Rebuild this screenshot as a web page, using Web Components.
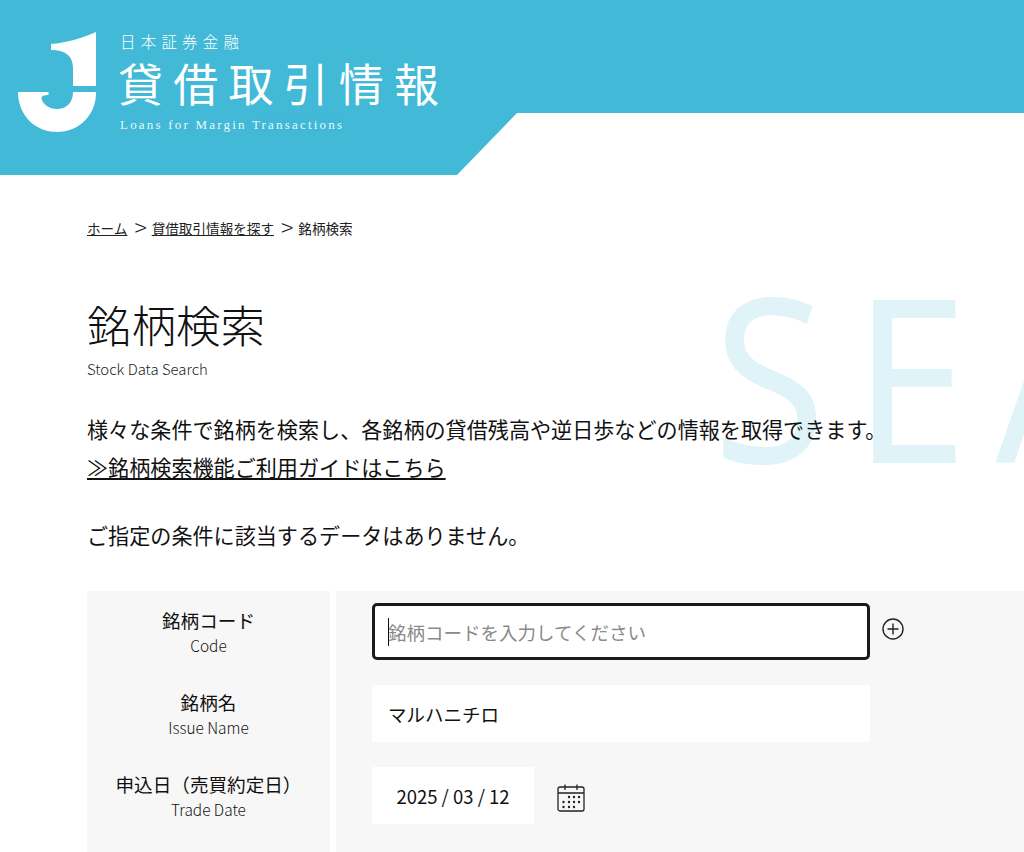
<!DOCTYPE html>
<html lang="ja">
<head>
<meta charset="utf-8">
<title>銘柄検索</title>
<style>
  html, body { margin: 0; height: 852px; overflow: hidden; background: #fff; }
  body { font-family: "Noto Sans CJK JP", "Noto Sans", sans-serif; color: #111; }
</style>
</head>
<body>
<site-header></site-header>
<page-main>
  <bread-crumbs></bread-crumbs>
  <page-title sub="Stock Data Search">銘柄検索</page-title>
  <intro-text></intro-text>
  <search-form>
    <form-row label="銘柄コード" sub="Code">
      <text-box placeholder="銘柄コードを入力してください" focused></text-box>
      <plus-icon></plus-icon>
    </form-row>
    <form-row label="銘柄名" sub="Issue Name">
      <text-box value="マルハニチロ"></text-box>
    </form-row>
    <form-row label="申込日（売買約定日）" sub="Trade Date">
      <date-box value="2025 / 03 / 12"></date-box>
      <calendar-icon></calendar-icon>
    </form-row>
  </search-form>
</page-main>

<script>
class SiteHeader extends HTMLElement {
    constructor() {
        super();
        this.attachShadow({ mode: 'open' });
    }

    connectedCallback() {
        this.shadowRoot.innerHTML = `
      <style>
        :host {
          display: block;
          height: 175px;
          background: #41b9d7;
          clip-path: polygon(0 0, 100% 0, 100% 113px, 517px 113px, 457px 175px, 0 175px);
          color: #fff;
        }
        .wrap {
          display: flex;
          gap: 24px;
          padding: 32px 0 0 18px;
        }
        svg { display: block; width: 78px; height: 100px; flex: none; }
        .small {
          font-size: 15.5px;
          line-height: 18px;
          letter-spacing: 5.2px;
          font-weight: 300;
        }
        .big {
          font-size: 45px;
          line-height: 56px;
          letter-spacing: 10.2px;
          font-weight: 400;
          margin: 5px 0 0 -2px;
          white-space: nowrap;
        }
        .en {
          font-family: "Liberation Serif", serif;
          font-size: 13px;
          line-height: 16px;
          letter-spacing: 2.2px;
          margin-top: 6px;
          opacity: .9;
        }
      </style>
      <div class="wrap">
        <svg viewBox="18 32 78 100" aria-hidden="true">
          <path fill="#fff" d="M96 32C82 38 66 43 51 44V50C64 50 73 55 73 68V86H96Z"/>
          <path fill="#fff" d="M18 92H48.5V95C44 95 41.5 96 41.5 98C42 104 49 109 57 109C66 109 73 103 73 92H96V93C96 115 79 132 57 132C35 132 18 115 18 92Z"/>
        </svg>
        <div class="text">
          <div class="small">日本証券金融</div>
          <div class="big">貸借取引情報</div>
          <div class="en">Loans for Margin Transactions</div>
        </div>
      </div>
    `;
    }
}
customElements.define('site-header', SiteHeader);

class PageMain extends HTMLElement {
    constructor() {
        super();
        this.attachShadow({ mode: 'open' });
    }

    connectedCallback() {
        this.shadowRoot.innerHTML = `
      <style>
        :host {
          display: block;
          position: relative;
          height: 677px;
          overflow: hidden;
        }
        .bg {
          position: absolute;
          left: 713px;
          top: 60px;
          font-family: "Noto Sans", sans-serif;
          font-weight: 400;
          font-size: 228px;
          line-height: 280px;
          letter-spacing: 31px;
          color: #dff3f8;
          white-space: nowrap;
          transform: scaleX(.9);
          transform-origin: left top;
        }
        .content { position: relative; padding-left: 87px; }
      </style>
      <div class="bg">SEARCH</div>
      <div class="content"><slot></slot></div>
    `;
    }
}
customElements.define('page-main', PageMain);

class BreadCrumbs extends HTMLElement {
    constructor() {
        super();
        this.attachShadow({ mode: 'open' });
    }

    connectedCallback() {
        this.shadowRoot.innerHTML = `
      <style>
        :host {
          display: block;
          padding-top: 42px;
          height: 20px;
          font-size: 13.6px;
          line-height: 20px;
          color: #222;
        }
        a { color: inherit; text-decoration: underline; }
        .sep {
          display: inline-block;
          position: relative;
          top: 2px;
          font-size: 23px;
          line-height: 14px;
          height: 14px;
          margin: 0 5px 0 7px;
          font-weight: 300;
        }
      </style>
      <a href="#">ホーム</a><span class="sep">&gt;</span><a href="#">貸借取引情報を探す</a><span class="sep">&gt;</span>銘柄検索
    `;
    }
}
customElements.define('bread-crumbs', BreadCrumbs);

class PageTitle extends HTMLElement {
    constructor() {
        super();
        this.attachShadow({ mode: 'open' });
    }

    connectedCallback() {
        this.shadowRoot.innerHTML = `
      <style>
        :host { display: block; margin-top: 53px; }
        h1 {
          margin: 0;
          font-size: 44.5px;
          line-height: 68px;
          font-weight: 300;
        }
        p {
          margin: 0;
          font-size: 14.9px;
          line-height: 22px;
          font-weight: 300;
          color: #222;
        }
      </style>
      <h1><slot></slot></h1>
      <p>${this.getAttribute('sub')}</p>
    `;
    }
}
customElements.define('page-title', PageTitle);

class IntroText extends HTMLElement {
    constructor() {
        super();
        this.attachShadow({ mode: 'open' });
    }

    connectedCallback() {
        this.shadowRoot.innerHTML = `
      <style>
        :host {
          display: block;
          margin-top: 30px;
          font-size: 21.1px;
          line-height: 38px;
          white-space: nowrap;
        }
        a { color: inherit; text-decoration: underline; }
        p { margin: 0; }
        .note { margin-top: 30px; }
      </style>
      <p>様々な条件で銘柄を検索し、各銘柄の貸借残高や逆日歩などの情報を取得できます。</p>
      <p><a href="#">≫銘柄検索機能ご利用ガイドはこちら</a></p>
      <p class="note">ご指定の条件に該当するデータはありません。</p>
    `;
    }
}
customElements.define('intro-text', IntroText);

class SearchForm extends HTMLElement {
    constructor() {
        super();
        this.attachShadow({ mode: 'open' });
    }

    connectedCallback() {
        this.shadowRoot.innerHTML = `
      <style>
        :host {
          display: block;
          margin-top: 37px;
          height: 300px;
          background: linear-gradient(to right, #f7f7f7 243px, #fff 243px, #fff 249px, #f7f7f7 249px);
        }
      </style>
      <slot></slot>
    `;
    }
}
customElements.define('search-form', SearchForm);

class FormRow extends HTMLElement {
    constructor() {
        super();
        this.attachShadow({ mode: 'open' });
    }

    connectedCallback() {
        this.shadowRoot.innerHTML = `
      <style>
        :host {
          display: grid;
          grid-template-columns: 243px 1fr;
          column-gap: 42px;
          height: 82px;
          align-items: center;
        }
        .label { text-align: center; font-size: 18.6px; line-height: 26px; }
        .sub { display: block; font-size: 15.4px; line-height: 24px; font-weight: 300; color: #111; }
        .field { display: flex; align-items: center; margin-top: -2px; }
      </style>
      <div class="label">${this.getAttribute('label')}<span class="sub">${this.getAttribute('sub')}</span></div>
      <div class="field"><slot></slot></div>
    `;
    }
}
customElements.define('form-row', FormRow);

class TextBox extends HTMLElement {
    constructor() {
        super();
        this.attachShadow({ mode: 'open' });
    }

    connectedCallback() {
        const placeholder = this.getAttribute('placeholder');
        const value = this.getAttribute('value');
        this.shadowRoot.innerHTML = `
      <style>
        :host {
          display: flex;
          align-items: center;
          box-sizing: border-box;
          position: relative;
          width: 498px;
          height: 57px;
          padding: 2px 0 0 16px;
          background: #fff;
          font-size: 18.5px;
        }
        :host([focused]) {
          outline: 3px solid #1a1a1a;
          outline-offset: -3px;
          border-radius: 5px;
        }
        .ph { color: #8a8a8a; }
        .caret { position: absolute; left: 16px; top: 15px; width: 1px; height: 28px; background: #111; }
      </style>
      ${placeholder ? `<span class="caret"></span><span class="ph">${placeholder}</span>` : `<span>${value}</span>`}
    `;
    }
}
customElements.define('text-box', TextBox);

class DateBox extends HTMLElement {
    constructor() {
        super();
        this.attachShadow({ mode: 'open' });
    }

    connectedCallback() {
        this.shadowRoot.innerHTML = `
      <style>
        :host {
          display: flex;
          align-items: center;
          justify-content: center;
          box-sizing: border-box;
          width: 162px;
          height: 57px;
          padding-top: 2px;
          background: #fff;
          font-size: 18.5px;
        }
      </style>
      ${this.getAttribute('value')}
    `;
    }
}
customElements.define('date-box', DateBox);

class PlusIcon extends HTMLElement {
    constructor() {
        super();
        this.attachShadow({ mode: 'open' });
    }

    connectedCallback() {
        this.shadowRoot.innerHTML = `
      <style>
        :host { display: block; margin-left: 12px; transform: translateY(-2px); }
        svg { display: block; width: 22px; height: 22px; }
      </style>
      <svg viewBox="0 0 22 22" fill="none" stroke="#222" stroke-width="1.4">
        <circle cx="11" cy="11" r="10"/>
        <path d="M11 5.5V16.5M5.5 11H16.5"/>
      </svg>
    `;
    }
}
customElements.define('plus-icon', PlusIcon);

class CalendarIcon extends HTMLElement {
    constructor() {
        super();
        this.attachShadow({ mode: 'open' });
    }

    connectedCallback() {
        this.shadowRoot.innerHTML = `
      <style>
        :host { display: block; margin-left: 22px; transform: translateY(3px); }
        svg { display: block; width: 30px; height: 30px; }
      </style>
      <svg viewBox="0 0 30 30" fill="none" stroke="#222" stroke-width="1.3">
        <rect x="2" y="4" width="26" height="24" rx="2"/>
        <path d="M2 10H28M9 1.5V7M21 1.5V7"/>
        <g fill="#222" stroke="none">
          <circle cx="13" cy="14" r="1.2"/><circle cx="18" cy="14" r="1.2"/><circle cx="23" cy="14" r="1.2"/>
          <circle cx="7.5" cy="19" r="1.2"/><circle cx="13" cy="19" r="1.2"/><circle cx="18" cy="19" r="1.2"/><circle cx="23" cy="19" r="1.2"/>
          <circle cx="7.5" cy="24" r="1.2"/><circle cx="13" cy="24" r="1.2"/><circle cx="18" cy="24" r="1.2"/>
        </g>
      </svg>
    `;
    }
}
customElements.define('calendar-icon', CalendarIcon);
</script>
</body>
</html>
